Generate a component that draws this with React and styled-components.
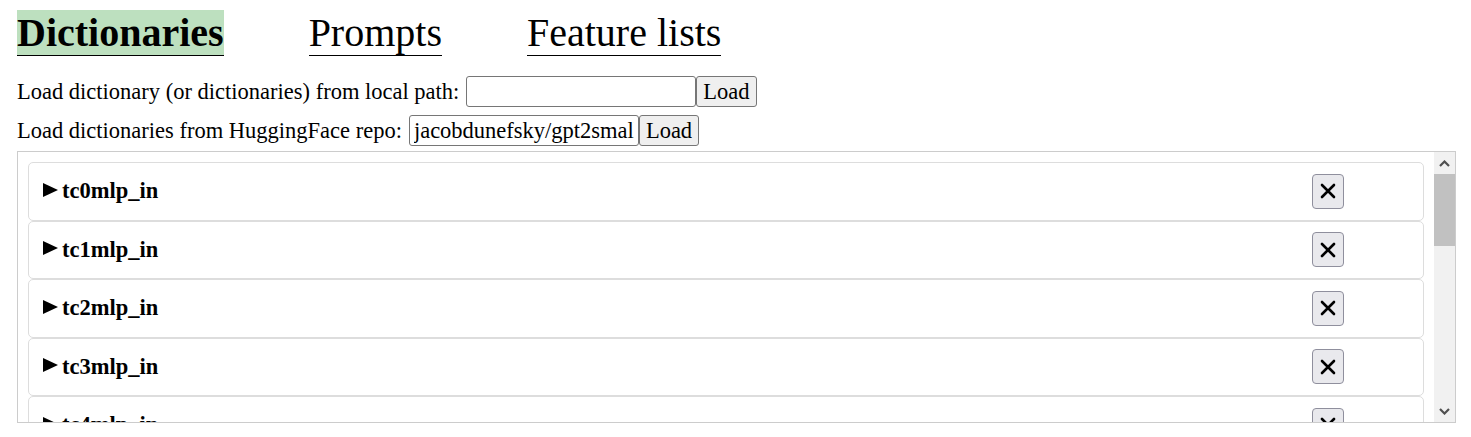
import styled, { createGlobalStyle } from "styled-components";

const GlobalStyle = createGlobalStyle`
	body {
		margin: 0;
		background: #ffffff;
		color: #000000;
		font-family: "Liberation Serif", "Times New Roman", serif;
	}
`;

const Page = styled.div`
	padding: 10px 15px 0 17px;
`;

const TabBar = styled.div`
	display: flex;
	gap: 85px;
`;

const Tab = styled.div`
	font-size: 40px;
	line-height: 45px;
	border-bottom: 1.5px solid #000;
	font-weight: ${(props) => (props.active ? 700 : 400)};
	background: ${(props) => (props.active ? "#bde0bf" : "transparent")};
`;

const LoadRow = styled.div`
	display: flex;
	align-items: center;
	font-size: 22.5px;
	margin-top: ${(props) => props.top}px;
`;

const Label = styled.span`
	margin-right: 7px;
`;

const PathInput = styled.input`
	box-sizing: border-box;
	width: 230px;
	height: 31px;
	font-family: "Liberation Serif", serif;
	font-size: 22.5px;
	padding: 0 4px;
	border: 1px solid #767676;
	border-radius: 3px;
	outline: none;
`;

const LoadButton = styled.button`
	box-sizing: border-box;
	height: 31px;
	padding: 0 6px;
	font-family: "Liberation Serif", serif;
	font-size: 22.5px;
	background: #efefef;
	border: 1px solid #767676;
	border-radius: 3px;
	color: #000;
`;

const ListPanel = styled.div`
	box-sizing: border-box;
	margin-top: 5px;
	height: 272px;
	width: 1439px;
	border: 1px solid #cccccc;
	display: flex;
`;

const EntryList = styled.div`
	flex: 1;
	padding: 10px;
	overflow: hidden;
`;

const ScrollBar = styled.div`
	width: 21px;
	background: #f1f1f1;
	display: flex;
	flex-direction: column;
`;

const ScrollArrow = styled.div`
	height: 22px;
	display: flex;
	align-items: center;
	justify-content: center;
`;

const ScrollTrack = styled.div`
	flex: 1;
`;

const ScrollThumb = styled.div`
	height: 72px;
	background: #c1c1c1;
`;

const Entry = styled.div`
	box-sizing: border-box;
	height: 58.5px;
	border: 1px solid #dddddd;
	border-radius: 5px;
	display: flex;
	align-items: center;
	padding: 0 79px 0 14px;
`;

const EntryName = styled.span`
	flex: 1;
	font-size: 22.5px;
	font-weight: 700;
	display: flex;
	align-items: center;
	gap: 4px;
`;

const Arrow = styled.span`
	width: 0;
	height: 0;
	border-left: 15px solid #000;
	border-top: 7.5px solid transparent;
	border-bottom: 7.5px solid transparent;
	margin-top: -3px;
`;

const RemoveButton = styled.button`
	box-sizing: border-box;
	width: 32px;
	height: 35px;
	display: flex;
	align-items: center;
	justify-content: center;
	padding: 0;
	background: #e9e9ed;
	border: 1px solid #8f8f9d;
	border-radius: 4px;
`;

const names = Array.from({ length: 14 }, (_, i) => `tc${i}mlp_in`);

const Chevron = ({ up }) => (
	<svg width="11" height="7" viewBox="0 0 11 7">
		<path
			d={up ? "M1 6 L5.5 1.5 L10 6" : "M1 1 L5.5 5.5 L10 1"}
			fill="none"
			stroke="#505050"
			strokeWidth="2.2"
		/>
	</svg>
);

const App = () => {
	return (
		<Page>
			<GlobalStyle />
			<TabBar>
				<Tab active>Dictionaries</Tab>
				<Tab>Prompts</Tab>
				<Tab>Feature lists</Tab>
			</TabBar>
			<LoadRow top={20}>
				<Label>Load dictionary (or dictionaries) from local path:</Label>
				<PathInput defaultValue="" />
				<LoadButton>Load</LoadButton>
			</LoadRow>
			<LoadRow top={8}>
				<Label>Load dictionaries from HuggingFace repo:</Label>
				<PathInput defaultValue="jacobdunefsky/gpt2small" />
				<LoadButton>Load</LoadButton>
			</LoadRow>
			<ListPanel>
				<EntryList>
					{names.map((name) => (
						<Entry key={name}>
							<EntryName>
								<Arrow />
								{name}
							</EntryName>
							<RemoveButton>
								<svg width="20" height="20" viewBox="0 0 20 20">
									<path
										d="M4 4 L16 16 M16 4 L4 16"
										stroke="#000"
										strokeWidth="2.6"
										strokeLinecap="round"
									/>
								</svg>
							</RemoveButton>
						</Entry>
					))}
				</EntryList>
				<ScrollBar>
					<ScrollArrow>
						<Chevron up />
					</ScrollArrow>
					<ScrollTrack>
						<ScrollThumb />
					</ScrollTrack>
					<ScrollArrow>
						<Chevron />
					</ScrollArrow>
				</ScrollBar>
			</ListPanel>
		</Page>
	);
};

export default App;
